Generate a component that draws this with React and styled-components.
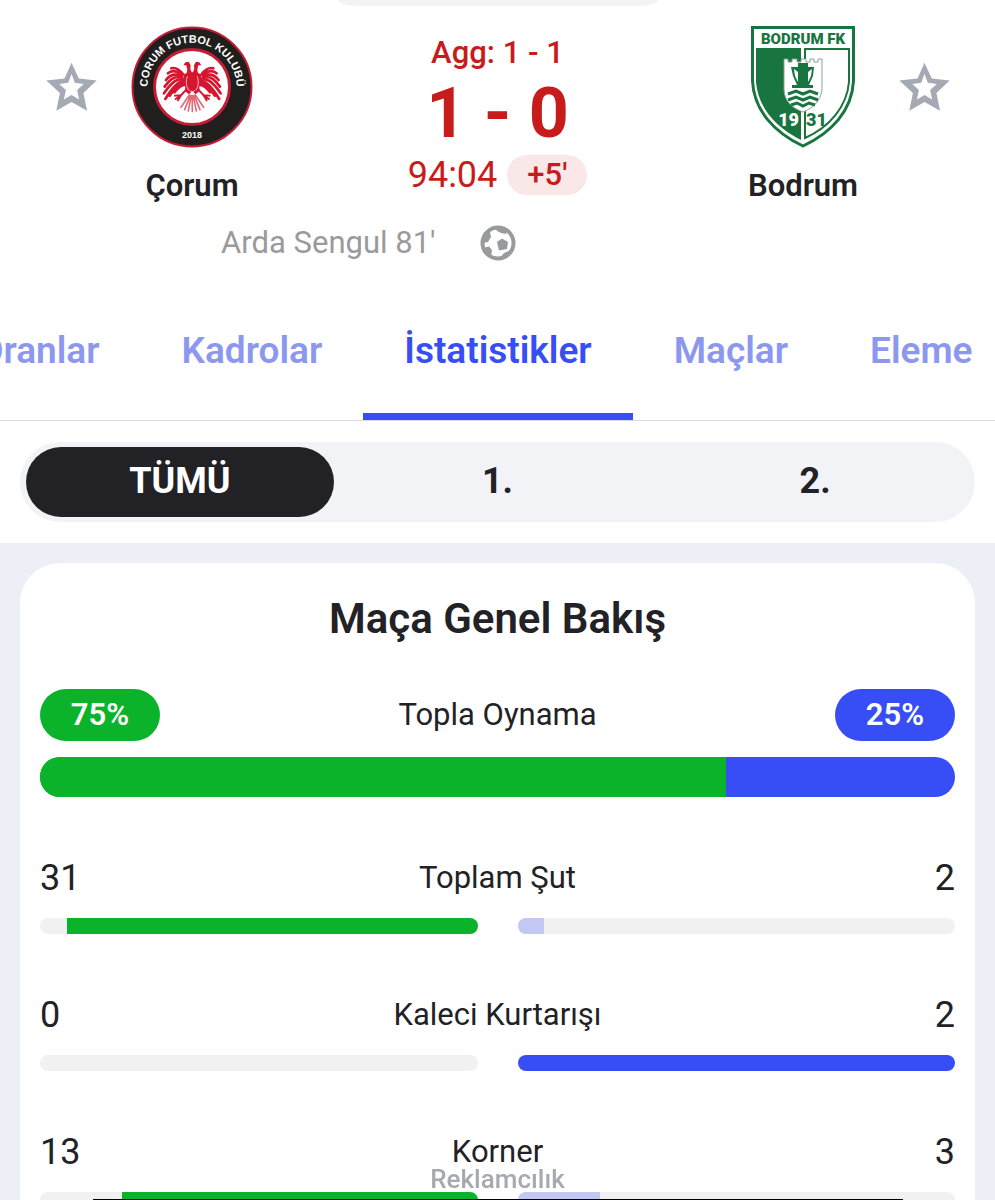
import React, { useEffect, useRef } from 'react';
import styled, { createGlobalStyle } from 'styled-components';

const GlobalStyle = createGlobalStyle`
  * {
    box-sizing: border-box;
  }

  body {
    margin: 0;
    background: #fff;
    color: #222226;
    font-family: Roboto, 'Liberation Sans', sans-serif;
  }

  button {
    border: 0;
    padding: 0;
    background: none;
    color: inherit;
    font: inherit;
    cursor: pointer;
  }
`;

const Page = styled.div`
  display: flex;
  flex-direction: column;
  height: 100vh;
  overflow: hidden;
`;

const Handle = styled.div`
  flex: none;
  align-self: center;
  width: 320px;
  height: 6px;
  border-radius: 0 0 20px 20px / 0 0 6px 6px;
  background: #f2f3f7;
`;

const Scoreboard = styled.header`
  flex: none;
  display: grid;
  grid-template-columns: 102px 140px 1fr 140px 102px;
  padding: 20px 20px 0;
`;

const StarButton = styled.button`
  height: 122px;
  display: flex;
  align-items: center;
  justify-content: center;
`;

const Team = styled.div`
  display: flex;
  flex-direction: column;
  align-items: center;
  gap: 20px;
`;

const TeamName = styled.span`
  font-size: 31px;
  line-height: 36px;
  font-weight: 600;
`;

const Result = styled.div`
  display: flex;
  flex-direction: column;
  align-items: center;
  padding-top: 9px;
  color: #c81c1c;
`;

const Aggregate = styled.span`
  font-size: 31px;
  line-height: 36px;
  font-weight: 500;
`;

const Score = styled.strong`
  font-size: 70px;
  line-height: 84px;
  font-weight: 700;
`;

const Clock = styled.div`
  display: flex;
  align-items: center;
  gap: 10px;
  font-size: 36px;
  line-height: 40px;
`;

const Added = styled.span`
  width: 80px;
  border-radius: 20px;
  background: #fae8e9;
  font-size: 31px;
  font-weight: 500;
  text-align: center;
`;

const Scorers = styled.div`
  flex: none;
  display: grid;
  grid-template-columns: 1fr 36px 1fr;
  gap: 44px;
  align-items: center;
  padding: 19px 20px 0;
  color: #9a9a9c;
  font-size: 31px;
  line-height: 40px;
`;

const Scorer = styled.span`
  text-align: right;
`;

const Tabs = styled.nav`
  flex: none;
  display: flex;
  margin-top: 19px;
  border-bottom: 1px solid #dcdce0;
  overflow-x: auto;
  scrollbar-width: none;
`;

const Tab = styled.button`
  flex: none;
  height: 138px;
  padding: 6px 41px 0;
  border-bottom: 7px solid ${({ $active }) => ($active ? '#374df5' : 'transparent')};
  color: ${({ $active }) => ($active ? '#374df5' : '#8c97f0')};
  font-size: 37px;
  font-weight: 600;
`;

const Periods = styled.div`
  flex: none;
  display: grid;
  grid-template-columns: repeat(3, 1fr);
  gap: 10px;
  margin: 21px 20px;
  padding: 5px 6px;
  border-radius: 40px;
  background: #f2f3f7;
`;

const Period = styled.button`
  height: 70px;
  padding-bottom: 3px;
  border-radius: 35px;
  font-size: 36px;
  font-weight: 700;

  &[aria-pressed='true'] {
    background: #222226;
    color: #fff;
  }
`;

const Main = styled.main`
  flex: 1 0 auto;
  padding: 20px 20px 0;
  background: #eceff5;
`;

const Card = styled.section`
  min-height: 100%;
  padding: 32px 20px;
  border-radius: 40px 40px 0 0;
  background: #fff;
`;

const CardTitle = styled.h2`
  margin: 0 0 46px;
  font-size: 42px;
  line-height: 48px;
  font-weight: 600;
  text-align: center;
`;

const StatLine = styled.div`
  display: flex;
  align-items: center;
  justify-content: space-between;
`;

const StatName = styled.span`
  font-size: 31px;
  line-height: 40px;
`;

const Share = styled.span`
  width: 120px;
  border-radius: 26px;
  background: ${({ $color }) => $color};
  color: #fff;
  font-size: 31px;
  line-height: 52px;
  font-weight: 600;
  text-align: center;
`;

const PossessionBar = styled.div`
  display: flex;
  height: 40px;
  margin: 16px 0 61px;
  border-radius: 20px;
  background: linear-gradient(to right, #0bb32a 50%, #374df5 50%);
  overflow: hidden;
`;

const Stat = styled.div`
  margin-bottom: 61px;
`;

const StatValue = styled.span`
  width: 120px;
  font-size: 36px;
  line-height: 40px;

  &:last-child {
    text-align: right;
  }
`;

const Bars = styled.div`
  display: grid;
  grid-template-columns: 1fr 1fr;
  gap: 40px;
  margin-top: 20px;
`;

const Track = styled.div`
  display: flex;
  justify-content: ${({ $home }) => ($home ? 'flex-end' : 'flex-start')};
  height: 16px;
  border-radius: 8px;
  background: #f1f1f1;
  overflow: hidden;
`;

const Fill = styled.div`
  background: ${({ $color }) => $color};
`;

const Advert = styled.aside`
  position: fixed;
  right: 0;
  bottom: 0;
  left: 0;
  display: flex;
  flex-direction: column;
  align-items: center;
  color: #a6a9b0;
  font-size: 26px;
  line-height: 30px;
  font-weight: 500;
`;

const AdvertFrame = styled.div`
  width: 810px;
  max-width: 100%;
  margin-top: 5px;
  border-top: 1px solid #000;
`;

const GREEN = '#0bb32a';
const BLUE = '#374df5';
const LILAC = '#c3c8f2';

const tabs = ['Oranlar', 'Kadrolar', 'İstatistikler', 'Maçlar', 'Eleme'];
const periods = ['TÜMÜ', '1.', '2.'];
const stats = [
  { name: 'Toplam Şut', home: 31, away: 2 },
  { name: 'Kaleci Kurtarışı', home: 0, away: 2 },
  { name: 'Korner', home: 13, away: 3 },
];

const Star = () => (
  <svg width="51" height="50" viewBox="45 32 154 150" aria-hidden="true">
    <path
      fill="#a4a9b3"
      fillRule="evenodd"
      d="M122 34 144 81 198 87 158 125 169 179 122 152 76 179 87 125 46 87 101 81ZM122 68 112 94 85 98 105 116 99 145 122 131 145 145 139 116 159 98 132 94Z"
    />
  </svg>
);

const Ball = () => (
  <svg width="36" height="36" viewBox="0 0 36 36" role="img" aria-label="Gol">
    <circle cx="18" cy="18" r="15.5" fill="#fff" stroke="#999a9c" strokeWidth="4" />
    <path
      fill="#999a9c"
      d="M17 17 22 13.500 28 17 27 24 19 25.500ZM4 7 10 7 11 12 8 17 2 18ZM15 2 28 4 26 9 21 8 17 6ZM3 23 9 21.500 12 25 11 32ZM20 33 24 28 31 25 24 34Z"
    />
  </svg>
);

const CorumCrest = () => (
  <svg width="122" height="122" viewBox="0 0 122 122" role="img" aria-label="Çorum FK">
    <defs>
      <path id="corum-arc" d="M17 68A44.500 44.500 0 1 1 105 68" />
    </defs>
    <circle cx="61" cy="61" r="59.500" fill="#201f1d" stroke="#c51d35" strokeWidth="2" />
    <circle cx="61" cy="61" r="37.500" fill="#fff" stroke="#c51d35" strokeWidth="3" />
    <text fill="#fff" fontFamily="Liberation Sans, sans-serif" fontSize="11" fontWeight="700">
      <textPath href="#corum-arc" startOffset="50%" textAnchor="middle">
        CORUM FUTBOL KULUBÜ
      </textPath>
    </text>
    <text x="61" y="112" fill="#fff" fontFamily="Liberation Sans, sans-serif" fontSize="9" fontWeight="700" textAnchor="middle">
      2018
    </text>
    <g transform="translate(28 29) scale(0.333)" fill="#d8152f" stroke="#d8152f" strokeLinecap="round">
      <path
        fill="none"
        strokeWidth="8"
        d="M72 58Q55 35 37 40M68 60Q44 40 27 55M68 64Q40 50 21 75M70 70Q46 55 17 95M72 76Q52 62 15 115M74 82Q56 72 19 132M76 86Q60 82 32 122M78 90Q66 88 46 112
        M128 58Q145 35 163 40M132 60Q156 40 173 55M132 64Q160 50 179 75M130 70Q154 55 183 95M128 76Q148 62 185 115M126 82Q144 72 181 132M124 86Q140 82 168 122M122 90Q134 88 154 112"
      />
      <path stroke="none" d="M98 52 94 42 95 31 89 20 79 22 73 31 82 31 85 44 83 54 74 58 72 76 79 96 78 108 90 118 100 108 110 118 122 108 121 96 128 76 126 58 117 54 115 44 118 31 127 31 121 22 111 20 105 31 106 42 102 52Z" />
      <path fill="none" strokeWidth="6" d="M82 104 66 121 48 122M66 121 50 132M66 121 57 136M118 104 134 121 152 122M134 121 150 132M134 121 143 136" />
      <path fill="none" stroke="#fff" strokeWidth="2" d="M85 65Q77 84 88 105M115 65Q123 84 112 105M92 106Q100 116 108 106" />
      <path fill="none" stroke="#df6b78" strokeWidth="5" d="M91 120 66 157M94 122 77 164M97 122 88 168M100 122V170M103 122 112 168M106 122 123 164M109 120 134 157" />
    </g>
  </svg>
);

const BodrumCrest = () => (
  <svg width="104" height="122" viewBox="0 0 104 122" role="img" aria-label="Bodrum FK">
    <path d="M1.500 1.500H102.500V55C101 85 80 107 52 120 24 107 3 85 1.500 55Z" fill="#fff" stroke="#19753f" strokeWidth="3" />
    <path d="M5 22H50V114C24 101 7 81 5 56Z" fill="#19753f" />
    <path d="M54 23H98V56C96 80 79 101 54 112Z" fill="#fff" stroke="#19753f" strokeWidth="2" />
    <text x="52" y="18" fill="#19753f" fontFamily="Roboto, sans-serif" fontSize="15" fontWeight="900" textAnchor="middle">
      BODRUM FK
    </text>
    <path
      d="M33 33H37V36H41V33H46V36H50V33H55V36H59V33H63V36H67V33H71V63C70 75 62 82 52 86 41 82 33 75 33 63Z"
      fill="#fff"
      stroke="#8aa596"
      strokeWidth="1"
    />
    <path
      fill="#19753f"
      fillRule="evenodd"
      d="M47 37H57V41H63L62 50 58 59H62V62H41V59H46L42 50 40 41H47ZM43 43 44 50 47 56 47 46ZM61 43 60 50 57 56 57 46Z"
    />
    <path
      fill="none"
      stroke="#19753f"
      strokeWidth="3"
      d="M37 68 45 65 52 68 59 65 67 68M37 74 45 71 52 74 59 71 67 74M40 79 46 77 52 80 58 77 64 79"
    />
    <text x="48" y="100" fill="#fff" fontFamily="Roboto, sans-serif" fontSize="18" fontWeight="900" textAnchor="end">
      19
    </text>
    <text x="55" y="100" fill="#19753f" fontFamily="Roboto, sans-serif" fontSize="18" fontWeight="900">
      31
    </text>
  </svg>
);

const TabBar = () => {
  const bar = useRef(null);
  const active = useRef(null);

  // keep the active tab in the middle of the strip
  useEffect(() => {
    const tab = active.current;
    bar.current.scrollLeft = tab.offsetLeft + tab.offsetWidth / 2 - bar.current.clientWidth / 2;
  }, []);

  return (
    <Tabs ref={bar}>
      {tabs.map((tab, index) => (
        <Tab key={tab} ref={index === 2 ? active : null} $active={index === 2}>
          {tab}
        </Tab>
      ))}
    </Tabs>
  );
};

const StatRow = ({ name, home, away }) => {
  const total = home + away;

  return (
    <Stat>
      <StatLine>
        <StatValue>{home}</StatValue>
        <StatName>{name}</StatName>
        <StatValue>{away}</StatValue>
      </StatLine>
      <Bars>
        <Track $home>
          <Fill $color={home > away ? GREEN : LILAC} style={{ width: `${(home / total) * 100}%` }} />
        </Track>
        <Track>
          <Fill $color={away > home ? BLUE : LILAC} style={{ width: `${(away / total) * 100}%` }} />
        </Track>
      </Bars>
    </Stat>
  );
};

export default () => (
  <Page>
    <GlobalStyle />
    <Handle />
    <Scoreboard>
      <StarButton aria-label="Çorum favori">
        <Star />
      </StarButton>
      <Team>
        <CorumCrest />
        <TeamName>Çorum</TeamName>
      </Team>
      <Result>
        <Aggregate>Agg: 1 - 1</Aggregate>
        <Score>1 - 0</Score>
        <Clock>
          94:04
          <Added>+5'</Added>
        </Clock>
      </Result>
      <Team>
        <BodrumCrest />
        <TeamName>Bodrum</TeamName>
      </Team>
      <StarButton aria-label="Bodrum favori">
        <Star />
      </StarButton>
    </Scoreboard>
    <Scorers>
      <Scorer>Arda Sengul 81'</Scorer>
      <Ball />
    </Scorers>
    <TabBar />
    <Periods>
      {periods.map((period, index) => (
        <Period key={period} aria-pressed={index === 0}>
          {period}
        </Period>
      ))}
    </Periods>
    <Main>
      <Card>
        <CardTitle>Maça Genel Bakış</CardTitle>
        <StatLine>
          <Share $color={GREEN}>75%</Share>
          <StatName>Topla Oynama</StatName>
          <Share $color={BLUE}>25%</Share>
        </StatLine>
        <PossessionBar>
          <Fill $color={GREEN} style={{ width: '75%' }} />
        </PossessionBar>
        {stats.map((stat) => (
          <StatRow key={stat.name} {...stat} />
        ))}
      </Card>
    </Main>
    <Advert>
      Reklamcılık
      <AdvertFrame />
    </Advert>
  </Page>
);
